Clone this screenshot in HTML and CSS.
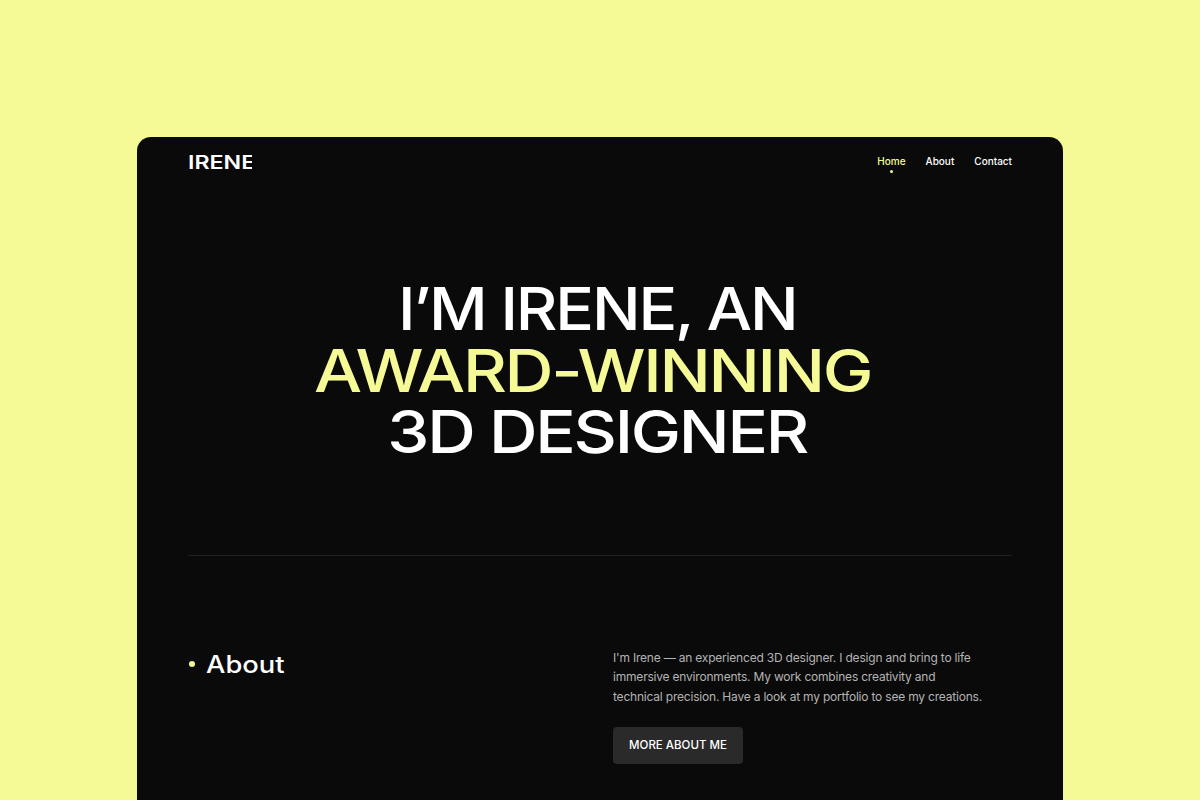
FILE: index.html
```html
<!DOCTYPE html>
<html lang="en">
<head>
    <meta charset="UTF-8">
    <title>Irene</title>
    <link rel="stylesheet" href="styles.css">
</head>
<body>
    <main class="card">
        <nav class="nav">
            <div class="logo"><span>IRENE</span></div>
            <div class="links">
                <a class="active" href="#">Home</a>
                <a href="#">About</a>
                <a href="#">Contact</a>
            </div>
        </nav>
        <section class="hero">
            <h1>
                <span class="line line-one">I’M IRENE, AN</span>
                <span class="line line-two">AWARD-WINNING</span>
                <span class="line line-three">3D DESIGNER</span>
            </h1>
        </section>
        <section class="about">
            <h2 class="about-title"><span class="dot"></span><span class="wide">About</span></h2>
            <div class="about-body">
                <p>I'm Irene — an experienced 3D designer. I design and bring to life<br>immersive environments. My work combines creativity and<br>technical precision. Have a look at my portfolio to see my creations.</p>
                <a class="button" href="#"><span>MORE ABOUT ME</span></a>
            </div>
        </section>
    </main>
</body>
</html>
```

FILE: styles.css
```css
html, body {
    height: 100%;
}
body {
    margin: 0;
    background-color: #f5fa96;
    font-family: "Inter", "Liberation Sans", sans-serif;
    overflow: hidden;
}
a {
    text-decoration: none;
    color: inherit;
}
.card {
    width: 926px;
    height: 663px;
    box-sizing: border-box;
    margin: 137px auto 0;
    padding: 0 51px;
    background-color: #0a0a0a;
    border-radius: 14px 14px 0 0;
    color: #fff;
}
.nav {
    display: flex;
    justify-content: space-between;
    align-items: center;
    padding-top: 13px;
    height: 22px;
}
.logo {
    width: 64px;
    margin-top: 3px;
    overflow: hidden;
    font-size: 19px;
    font-weight: 600;
    line-height: 22px;
}
.logo span {
    display: inline-block;
    transform: scaleX(1.22);
    transform-origin: left;
}
.links {
    display: flex;
    gap: 20px;
    font-size: 10px;
    font-weight: 500;
}
.links a {
    position: relative;
}
.links .active {
    color: #f5fa96;
}
.links .active::after {
    content: "";
    position: absolute;
    left: 50%;
    bottom: -6px;
    width: 3px;
    height: 3px;
    margin-left: -1.5px;
    border-radius: 50%;
    background-color: #f5fa96;
}
.hero {
    height: 384px;
    border-bottom: 1px solid #222;
    box-sizing: border-box;
    padding-top: 106px;
}
h1 {
    margin: 0;
    font-size: 59px;
    font-weight: 500;
    line-height: 61.5px;
    letter-spacing: -2px;
    text-align: center;
}
.line {
    display: block;
}
.line-one {
    padding-right: 5px;
    transform: scaleX(1.09);
}
.line-two {
    padding-right: 13px;
    color: #f5fa96;
    transform: scaleX(1.15);
}
.line-three {
    padding-right: 5px;
    transform: scaleX(1.14);
}
.about {
    display: flex;
    padding-top: 92px;
}
.about-title {
    display: flex;
    align-items: center;
    gap: 11px;
    width: 425px;
    height: 32px;
    margin: 0;
    font-size: 24px;
    font-weight: 500;
}
.wide {
    display: inline-block;
    transform: scaleX(1.14);
    transform-origin: left;
}
.dot {
    width: 6px;
    height: 6px;
    margin-left: 1px;
    border-radius: 50%;
    background-color: #f5fa96;
}
.about-body p {
    margin: 0;
    font-size: 12px;
    line-height: 19.3px;
    letter-spacing: -0.2px;
    color: #b4b4b4;
    white-space: nowrap;
}
.button {
    display: flex;
    align-items: center;
    justify-content: center;
    width: 130px;
    height: 37px;
    margin-top: 21px;
    background-color: #2a2a2a;
    border-radius: 4px;
    font-size: 11.5px;
    font-weight: 500;
}
```
